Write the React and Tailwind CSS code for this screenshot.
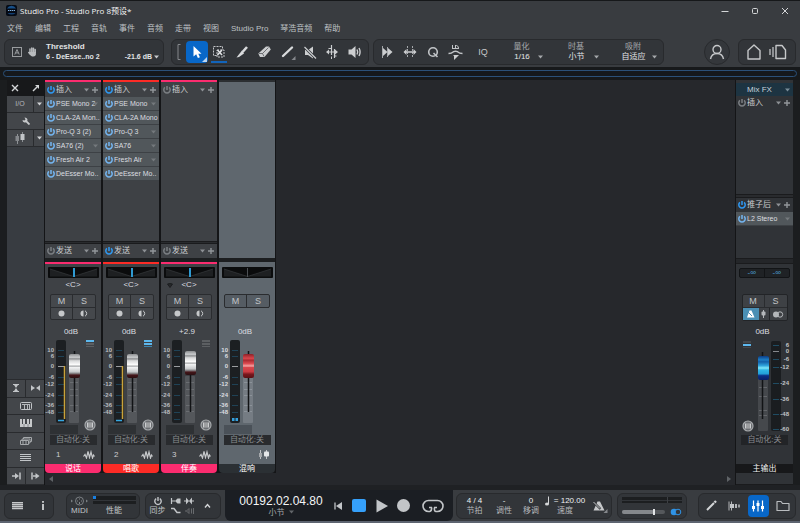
import React from "react";

const BLUE = "#2f93e6";

function Svg({ w, h, children, className = "" }) {
  return (
    <svg
      width={w}
      height={h}
      viewBox={`0 0 ${w} ${h}`}
      fill="none"
      stroke="none"
      aria-hidden="true"
      className={`block shrink-0 ${className}`}
    >
      {children}
    </svg>
  );
}

function Power({ on = true, soft = false }) {
  const c = on ? (soft ? "#74b6f2" : "#2e9af5") : "#7b7f83";
  return (
    <Svg w={8} h={8}>
      <path d="M1.900 1.400A3.200 3.200 0 1 0 6.100 1.400" stroke={c} strokeWidth="1.500" />
      <path d="M4 0V4" stroke={c} strokeWidth="1.500" />
    </Svg>
  );
}

function Caret({ color = "#8d9195" }) {
  return (
    <Svg w={5} h={4}>
      <path d="M0 0.5H5L2.5 3.5Z" fill={color} />
    </Svg>
  );
}

function Plus() {
  return (
    <Svg w={6} h={6}>
      <path d="M3 0V6M0 3H6" stroke="#92969a" strokeWidth="1.4" />
    </Svg>
  );
}

function Wave() {
  return (
    <Svg w={12} h={9}>
      <path
        d="M0.5 6.5L2 4.5L3.5 8L5 1.5L6.5 7.5L8 2L9.5 8L10.5 5L11.5 6.5"
        stroke="#c6c8ca"
        strokeWidth="1.2"
      />
    </Svg>
  );
}

/* ---------- title, menu, toolbar ---------- */

function TitleBar() {
  return (
    <header className="flex h-[19px] items-center pl-[6px]">
      <Svg w={11} h={11}>
        <rect width="11" height="11" rx="2" fill="#050a14" />
        <path d="M1 3.5A5 5 0 0 1 10 3.5Z" fill="#17508a" />
        <path d="M1.5 8A5 4 0 0 0 9.5 8Z" fill="#123f72" />
        <path d="M2 5.5H9" stroke="#7fb0e0" strokeWidth="1" strokeDasharray="1.4 0.6" />
      </Svg>
      <h1 className="ml-[3px] flex-1 font-['Open_Sans','Noto_Sans_CJK_SC',sans-serif] text-[8px] leading-[12px] text-[#f4f4f4]">
        Studio Pro - Studio Pro 8预设*
      </h1>
      <div className="flex items-center gap-[22px] pr-[11px]">
        <button aria-label="最小化">
          <Svg w={8} h={8}><path d="M0.5 4.5H7.5" stroke="#d4d6d8" /></Svg>
        </button>
        <button aria-label="最大化">
          <Svg w={8} h={8}><rect x="1.500" y="1.500" width="5" height="5" rx="1" stroke="#d4d6d8" /></Svg>
        </button>
        <button aria-label="关闭">
          <Svg w={8} h={8}><path d="M1 1L7 7M7 1L1 7" stroke="#d4d6d8" /></Svg>
        </button>
      </div>
    </header>
  );
}

const MENUS = ["文件", "编辑", "工程", "音轨", "事件", "音频", "走带", "视图", "Studio Pro", "琴浩音频", "帮助"];

function MenuBar() {
  return (
    <nav className="flex h-[17px] items-center gap-3 pl-[7px] text-[8px] text-[#bfc2c5]">
      {MENUS.map((m) => (
        <button key={m} className="whitespace-nowrap">{m}</button>
      ))}
    </nav>
  );
}

function Panel({ children, className = "" }) {
  return (
    <div className={`flex h-[26px] shrink-0 items-center rounded-md border border-[#282a2d] bg-[#323539] ${className}`}>
      {children}
    </div>
  );
}

function Tool({ label, children, className = "w-[23px]" }) {
  return (
    <button aria-label={label} className={`flex h-[22px] items-center justify-center ${className}`}>
      {children}
    </button>
  );
}

function Choice({ label, options, width }) {
  return (
    <label className={`flex flex-col items-center text-[8px] text-[#a5a8ab] ${width}`}>
      <span className="h-[10px] leading-[10px]">{label}</span>
      <span className="flex h-[10px] w-full items-center">
        <select className="min-w-0 flex-1 appearance-none bg-transparent pl-[6px] text-center leading-[10px] text-[#e3e5e7]">
          {options.map((o) => <option key={o}>{o}</option>)}
        </select>
        <Caret color="#a5a8ab" />
      </span>
    </label>
  );
}

function Toolbar() {
  return (
    <div className="flex h-[30px] items-center px-1">
      <Panel className="w-[160px] pr-1 pl-[7px]">
        <Svg w={10} h={10}>
          <rect x="0.5" y="0.5" width="9" height="9" stroke="#9a9da0" />
          <path d="M2.8 7.5L5 2.5L7.2 7.5M3.6 5.9H6.4" stroke="#9a9da0" />
        </Svg>
        <Svg w={9} h={10} className="ml-[6px]">
          <path
            d="M2 5.5V2M3.8 5V1M5.5 5V1.2M7.2 5.5V2.4M0.8 5.5L2.5 7.5"
            stroke="#b9bcbf" strokeWidth="1.5" strokeLinecap="round"
          />
          <path d="M1.6 5H7.9V7.2A2.6 2.6 0 0 1 5.4 9.6H4.2Q3 9.4 1.6 6.8Z" fill="#b9bcbf" />
        </Svg>
        <div className="ml-[9px] flex-1 text-[8px] leading-[10px] font-bold text-[#e1e3e5]">
          <div>Threshold</div>
          <div className="flex items-center justify-between text-[7px]">
            <span>6 - DeEsse..no 2</span>
            <span className="flex items-center gap-[2px]">-21.6 dB <Caret color="#c8cacc" /></span>
          </div>
        </div>
      </Panel>

      <Panel className="ml-[7px] w-[198px] pl-[5px]">
        <Svg w={4} h={16}><path d="M3.5 0.5H1V15.5H3.5" stroke="#85888c" /></Svg>
        <button aria-label="箭头工具" aria-pressed="true" className="ml-[5px] flex h-[22px] w-[22px] shrink-0 items-center justify-center rounded-sm bg-[#0867c8]">
          <Svg w={20} h={20}>
            <path d="M6.500 4V14.500L9.200 12.300L10.900 16L12.900 15.200L11.300 11.700H14.500Z" fill="#fff" />
            <path d="M20 15V20H15Z" fill="#bcd6f2" />
          </Svg>
        </button>
        <Tool label="范围工具">
          <Svg w={18} h={22}>
            <rect x="3.5" y="5.500" width="9" height="9" stroke="#c2c5c8" strokeDasharray="2 1" />
            <rect x="7" y="9" width="7" height="7" fill="#323539" stroke="#c2c5c8" strokeDasharray="2 1" />
            <path d="M7.500 9L12 14M12 9L7.500 14" stroke="#e0e2e4" strokeWidth="1.600" />
            <path d="M1 21H17" stroke="#0b72dc" strokeWidth="1.600" />
          </Svg>
        </Tool>
        <Tool label="切分工具">
          <Svg w={12} h={12}>
            <path d="M11 1L6.500 6" stroke="#d8dadc" strokeWidth="2.600" />
            <path d="M6 4.500L0.500 11.500L3 11L8 7.500Z" fill="#d8dadc" />
          </Svg>
        </Tool>
        <Tool label="擦除工具">
          <Svg w={13} h={12}>
            <path d="M8 0.500H11L12.800 3.500L6.500 11H2L0.300 7.500Z" fill="#ccced0" />
            <path d="M1 7.500H4.500L10.500 1.500M4.500 7.500L6 10.500" stroke="#45484c" strokeWidth="0.700" />
          </Svg>
        </Tool>
        <Tool label="绘制工具">
          <Svg w={16} h={18}>
            <path d="M3 13L12 4.500" stroke="#d8dadc" strokeWidth="2.400" strokeLinecap="round" />
            <path d="M15.500 13V17H11.500Z" fill="#85888c" />
          </Svg>
        </Tool>
        <Tool label="静音工具">
          <Svg w={13} h={13}>
            <path d="M1 4H4L9 0.500V12.500L4 9H1Z" fill="#ccced0" />
            <path d="M0.500 1L12 12.500" stroke="#323539" strokeWidth="2.800" />
            <path d="M0.500 1L12 12.500" stroke="#ccced0" strokeWidth="1.300" />
          </Svg>
        </Tool>
        <Tool label="弯曲工具" className="w-[21px]">
          <Svg w={12} h={14}>
            <path d="M5.500 0V10M2 7H10M8.500 4V13" stroke="#ccced0" strokeWidth="1.200" />
            <path d="M0 7L3 4.500V9.500ZM12 7L9 4.500V9.500Z" fill="#ccced0" />
            <path d="M2.500 3.500H6M5.500 11.500V14M8 11H10.500" stroke="#ccced0" />
          </Svg>
        </Tool>
        <Tool label="监听工具" className="w-[26px]">
          <Svg w={14} h={12}>
            <path d="M0.500 3.500H3.500L7.500 0V12L3.500 8.500H0.500Z" fill="#ccced0" />
            <path d="M9 3.500Q10.400 6 9 8.500M11 2Q13.200 6 11 10" stroke="#ccced0" strokeWidth="1.400" />
          </Svg>
        </Tool>
      </Panel>

      <Panel className="ml-[4px] w-[291px] pl-[1px]">
        <Tool label="跟随播放">
          <Svg w={12} h={14}>
            <path d="M1.500 1V13M6.500 2V12" stroke="#a5a8ab" />
            <path d="M2 3L6.500 7L2 11ZM7 3L11.500 7L7 11Z" fill="#ccced0" />
          </Svg>
        </Tool>
        <Tool label="自动滚动">
          <Svg w={14} h={14}>
            <path d="M4.500 1V13M9.500 1V13" stroke="#a5a8ab" strokeDasharray="2 1" />
            <path d="M2 7H12" stroke="#ccced0" strokeWidth="1.500" />
            <path d="M0.500 7L3.500 4V10ZM13.500 7L10.500 4V10Z" fill="#ccced0" />
          </Svg>
        </Tool>
        <Tool label="量化">
          <Svg w={12} h={12}>
            <circle cx="6" cy="6" r="4.300" stroke="#c2c5c8" strokeWidth="1.600" />
            <path d="M6.500 7L10.500 11" stroke="#c2c5c8" strokeWidth="1.600" />
          </Svg>
        </Tool>
        <Tool label="时间拉伸">
          <Svg w={15} h={16}>
            <path d="M4.500 1V5M4 4.500H10.500M7.500 1V4M7 1.500H8.500Q11 2 10.500 5" stroke="#c2c5c8" />
            <path d="M0.500 9.500Q3.500 9.500 5.500 7.700Q7.500 6.700 9.500 7.700Q11.500 9.500 14.500 9.500" stroke="#c2c5c8" strokeWidth="1.500" />
            <path d="M5 11H11L6 16V12Z" fill="#ccced0" />
          </Svg>
        </Tool>
        <Tool label="输入量化" className="w-[32px]">
          <span className="text-[9px] text-[#c6c8ca]">IQ</span>
        </Tool>
        <div className="ml-px flex gap-[10px]">
          <Choice label="量化" options={["1/16", "1/8", "1/4"]} width="w-[43px]" />
          <Choice label="时基" options={["小节", "秒"]} width="w-[46px]" />
          <Choice label="吸附" options={["自适应", "关"]} width="w-[48px]" />
        </div>
      </Panel>

      <div className="flex-1" />
      <button aria-label="用户" className="mr-[8px] flex h-[26px] w-[26px] items-center justify-center rounded-full border border-[#282a2d] bg-[#34373b]">
        <Svg w={16} h={16}>
          <circle cx="8" cy="5.500" r="4" stroke="#c6c8ca" strokeWidth="1.400" />
          <path d="M1.500 15Q2.500 9.500 8 9.500T14.500 15" stroke="#c6c8ca" strokeWidth="1.400" />
        </Svg>
      </button>
      <Panel className="w-[58px] justify-between px-[8px]">
        <button aria-label="起始页">
          <Svg w={14} h={16}>
            <path d="M1 15V6.500L7 1L13 6.500V15Z" stroke="#c6c8ca" strokeWidth="1.400" strokeLinejoin="round" />
          </Svg>
        </button>
        <button aria-label="页面">
          <Svg w={18} h={16}>
            <path d="M1 5V11M4 3V13" stroke="#b4b7ba" strokeWidth="1.400" />
            <path d="M7 1.500H13L16.500 6V14.500H7Z" stroke="#c6c8ca" strokeWidth="1.400" strokeLinejoin="round" />
          </Svg>
        </button>
      </Panel>
    </div>
  );
}

/* ---------- mixer ---------- */

const sideButton = "flex items-center justify-center bg-[#43464a]";

function SideBar() {
  return (
    <aside className="flex w-[37px] shrink-0 flex-col bg-[#383c41] text-[7px] text-[#b4b7ba]">
      <div className="flex h-4 items-center justify-between bg-[#17181a] px-[4px]">
        <button aria-label="关闭混音台">
          <Svg w={8} h={8}><path d="M1 1L7 7M7 1L1 7" stroke="#d4d6d8" strokeWidth="1.400" /></Svg>
        </button>
        <button aria-label="分离窗口">
          <Svg w={8} h={8}>
            <path d="M1 7L5 3" stroke="#d4d6d8" strokeWidth="1.400" />
            <path d="M3 1H7V5Z" fill="#d4d6d8" />
          </Svg>
        </button>
      </div>
      <div className="grid grid-cols-[26px_1fr] grid-rows-[16px_16px_16px] gap-px bg-[#292b2e] pb-px">
        <button className={sideButton}>I/O</button>
        <button aria-label="I/O 选项" className={sideButton}><Caret color="#d0d2d4" /></button>
        <button aria-label="设置" className={`col-span-2 ${sideButton}`}>
          <Svg w={8} h={8}>
            <path d="M3.500 3.500L7.500 7.500" stroke="#c6c8ca" strokeWidth="1.800" />
            <path d="M0.500 3L2.500 3.500L3.500 2.500L2.500 0.500Q5.500 0.500 5.500 3Q5 6 2.500 5.500Q0.500 5 0.500 3Z" fill="#c6c8ca" />
          </Svg>
        </button>
        <button aria-label="推子视图" className={sideButton}>
          <Svg w={10} h={12}>
            <path d="M2.500 2V12M7.500 0V10" stroke="#8d9195" />
            <rect x="0.500" y="4" width="3.500" height="5" fill="#85888c" />
            <rect x="5.500" y="2" width="4" height="6" fill="#c2c5c8" />
          </Svg>
        </button>
        <button aria-label="推子视图选项" className={sideButton}><Caret color="#d0d2d4" /></button>
      </div>
      <div className="flex-1" />
      <div className="grid h-[106px] grid-cols-2 grid-rows-6 gap-px border-y border-[#292b2e] bg-[#292b2e]">
        <button aria-label="收窄高度" className={sideButton}>
          <Svg w={6} h={8}><path d="M0 0.500H6M0 7.500H6" stroke="#c2c5c8" /><path d="M1 1H5L3 4ZM1 7H5L3 4Z" fill="#c2c5c8" /></Svg>
        </button>
        <button aria-label="收窄宽度" className={sideButton}>
          <Svg w={9} h={6}><path d="M0.500 0.500V5.500M8.500 0.500V5.500" stroke="#c2c5c8" /><path d="M1 1L4 3L1 5ZM8 1L5 3L8 5Z" fill="#c2c5c8" /></Svg>
        </button>
        <button aria-label="输入" className={`col-span-2 ${sideButton}`}>
          <Svg w={12} h={8}><rect x="0.500" y="0.500" width="11" height="7" rx="1" stroke="#c2c5c8" /><path d="M2 2.500H10M4.500 3V7M7.500 3V7M9.500 3V7" stroke="#b4b7ba" /></Svg>
        </button>
        <button aria-label="乐器" className={`col-span-2 ${sideButton}`}>
          <Svg w={12} h={8}><path d="M0 0V8H12V0H10V5H9V0H7V5H5V0H3V5H2V0Z" fill="#c6c8ca" /><path d="M4 5V8M8 5V8" stroke="#43464a" strokeWidth="0.500" /></Svg>
        </button>
        <button aria-label="组" className={`col-span-2 ${sideButton}`}>
          <Svg w={12} h={8}><path d="M0.500 3.500H8.500V7.500H0.500ZM2 3V2H10V6H9M3.500 2V0.500H11.500V4.500H10" stroke="#a5a8ab" /><path d="M3 4V7M6 4V7" stroke="#a5a8ab" /></Svg>
        </button>
        <button aria-label="列表" className={`col-span-2 ${sideButton}`}>
          <Svg w={11} h={8}><path d="M0 0.500H11M0 2.500H11M0 4.500H11M0 6.500H11" stroke="#c2c5c8" /></Svg>
        </button>
        <button aria-label="左侧固定" className={sideButton}>
          <Svg w={9} h={8}><path d="M0 4H4M8 0.500V7.500" stroke="#c2c5c8" strokeWidth="1.500" /><path d="M3 1L7 4L3 7Z" fill="#c2c5c8" /></Svg>
        </button>
        <button aria-label="右侧固定" className={sideButton}>
          <Svg w={9} h={8}><path d="M1 0.500V7.500M2 4H5" stroke="#c2c5c8" strokeWidth="1.500" /><path d="M4.500 1L8.500 4L4.500 7Z" fill="#c2c5c8" /></Svg>
        </button>
      </div>
    </aside>
  );
}

function SlotHeader({ label, on, className = "h-[14px]" }) {
  return (
    <div className={`flex shrink-0 items-center pr-[3px] pl-[2px] text-[8px] text-[#ccced0] ${className}`}>
      <button aria-label={`${label} 开关`} aria-pressed={on}><Power on={on} /></button>
      <span className="ml-px flex-1 whitespace-nowrap">{label}</span>
      <button aria-label={`${label} 选项`} className="mr-[3px]"><Caret /></button>
      <button aria-label={`添加${label}`}><Plus /></button>
    </div>
  );
}

function Insert({ name }) {
  return (
    <li className="flex h-[14px] items-center border-b border-[#3d4145] bg-[#51575b] pr-[3px] pl-[2px] text-[7px] text-[#dcdee0]">
      <button aria-label={`${name} 开关`} aria-pressed="true"><Power soft /></button>
      <span className="ml-px w-0 flex-1 whitespace-nowrap">{name}</span>
      {name.length < 11 && <Caret color="#74797d" />}
    </li>
  );
}

function Pan({ active }) {
  return (
    <Svg w={51} h={11}>
      <rect width="51" height="11" rx="1" fill="#0b0c0d" />
      <path d="M2 2L25.500 9.500L49 2V9.500H2Z" fill="#1e2022" />
      <path d="M2 2L25.500 9.500L49 2" stroke="#37393c" strokeWidth="0.700" />
      {active ? <rect x="25" y="1" width="2" height="9" fill="#2f9ad2" /> : <rect x="25" y="1" width="1" height="9" fill="#4c5054" />}
    </Svg>
  );
}

const SCALE = [["10", 10], ["6", 16], ["0", 26], ["-6", 37], ["-12", 44], ["-24", 55], ["-36", 65], ["-48", 72]];

function GroupBadge({ x, y }) {
  return (
    <g transform={`translate(${x} ${y})`}>
      <circle r="5" stroke="#a5a8ab" strokeWidth="1.200" fill="#6a6d71" />
      <rect x="-3" y="-2.500" width="6" height="5" fill="#ccced0" />
      <path d="M-1 -2.500V2.500M1 -2.500V2.500" stroke="#45484c" strokeWidth="0.700" />
    </g>
  );
}

function FaderArt({ ch }) {
  const fx = ch.fx;
  return (
    <Svg w={56} h={95} className="[grid-area:1/1]">
      {SCALE.map(([t, y]) => (
        <text key={t} x="9" y={y + 2} textAnchor="end" fontSize="6" fontWeight="bold" fill={fx ? "#dcdee0" : "#babdc0"}>{t}</text>
      ))}
      <rect x="11" y="0" width="10" height="83" rx="2" fill="#1c1f22" />
      {SCALE.map(([t, y]) => (
        <path key={t} d={`M13 ${y + 0.5}H19`} stroke={t === "0" ? "#9a9da0" : "#1f4256"} />
      ))}
      {ch.level && <path d="M19.500 26V79" stroke="#c9a23a" strokeWidth="1.500" />}
      {ch.level && <path d="M13 80.500H19" stroke="#35a7e0" strokeWidth="1.500" />}
      {!ch.level && <path d="M13 79.500H19" stroke={fx ? "#35a0dc" : "#1f4256"} strokeWidth={fx ? 3 : 1} strokeDasharray={fx ? "2.500 1" : "none"} />}
      <rect x="24" y="36" width="10" height="47" rx="1" fill={fx ? "#757c83" : "#54575b"} />
      <path d="M25 42.500H33M25 49.500H33M25 55.500H33M25 65.500H33M25 71.500H33" stroke={fx ? "#8b9299" : "#6a6d71"} />
      <path d="M29.500 11V72" stroke="#111315" strokeWidth="1.500" />
      {!fx && (
        <g>
          <rect x="41" y="0" width="8" height="2" fill={ch.level ? "#5db8ee" : "#5c5f62"} />
          <rect x="41" y="3" width="8" height="2" fill={ch.bars > 1 ? "#5db8ee" : "#5c5f62"} />
          <rect x="41" y="6" width="8" height="1" fill={ch.bars > 1 ? "#3c86b0" : "#5c5f62"} />
          <GroupBadge x={45} y={85} />
        </g>
      )}
      <rect x="5" y="85" width="28" height="9" fill={fx ? "#4a5158" : "#2e3134"} />
    </Svg>
  );
}

const thumbBase =
  "m-0 w-[11px] cursor-pointer appearance-none bg-transparent [direction:rtl] [writing-mode:vertical-lr] [&::-webkit-slider-thumb]:h-6 [&::-webkit-slider-thumb]:w-[11px] [&::-webkit-slider-thumb]:appearance-none [&::-webkit-slider-thumb]:rounded-xs";
const silverThumb =
  "[&::-webkit-slider-thumb]:bg-[linear-gradient(#8d8f91_0%,#c9cbcd_14%,#8d8f91_20%,#d8d9da_28%,#ffffff_46%,#9d9fa1_50%,#f0f1f2_56%,#c9cbcd_74%,#8d8f91_80%,#441519_88%,#2a1012_100%)]";
const redThumb =
  "[&::-webkit-slider-thumb]:bg-[linear-gradient(#8c1f26_0%,#d8464c_18%,#a92a31_26%,#dc4c52_40%,#f3a5a5_50%,#d8464c_56%,#c93b42_74%,#7a171d_84%,#5a1014_100%)]";
const blueThumb =
  "[&::-webkit-slider-thumb]:bg-[linear-gradient(#0a3c86_0%,#1e7ec4_16%,#125ea8_24%,#2fa3dc_40%,#7fe8fa_50%,#2fb6e6_58%,#23a0d8_74%,#0b2f86_82%,#081f66_100%)]";

function MuteSolo() {
  return (
    <>
      <button className="h-[13px] border-r border-b border-[#2a2c2f] text-[9px] leading-[12px]">M</button>
      <button className="h-[13px] border-b border-[#2a2c2f] text-[9px] leading-[12px]">S</button>
    </>
  );
}

function Channel({ ch }) {
  const fx = ch.fx;
  const body = fx ? "bg-[#5f676e]" : "bg-[#3e4145]";
  return (
    <section aria-label={ch.name} className="flex w-[56px] shrink-0 flex-col">
      <div className={`h-[2px] ${ch.line}`} />
      <div className={`flex flex-1 flex-col ${body}`}>
        {!fx && (
          <>
            <SlotHeader label="插入" on={ch.ins} className="h-[15px]" />
            <ul className="flex-1">
              {ch.inserts.map((n) => <Insert key={n} name={n} />)}
            </ul>
            <div className="h-[3px] border-y border-[#1a1b1d] bg-[#292b2e]" />
            <SlotHeader label="发送" on={ch.send} />
          </>
        )}
      </div>
      <div className="h-1 bg-[#1c1e20]" />
      <div className={`h-[2px] ${ch.line2}`} />
      <div className={`flex h-[200px] flex-col items-center pt-[3px] ${body}`}>
        <Pan active={!fx} />
        <div className="grid h-[16px] w-full grid-cols-[1fr_20px_1fr] items-center justify-items-center pb-[2px] text-[8px] text-[#dcdee0]">
          <span>
            {ch.marker && <Svg w={6} h={5}><path d="M0.500 1Q3 0 5.500 1L3 4.500Z" fill="#26282b" stroke="#1c1e20" /></Svg>}
          </span>
          <span>{fx ? "" : "<C>"}</span>
        </div>
        <div className="h-[26px] w-[46px]">
          <div className={`grid grid-cols-2 rounded-xs border border-[#2a2c2f] text-[#c2c5c8] ${fx ? "h-[14px] bg-[#555c63]" : "bg-[#45484c]"}`}>
            <MuteSolo />
            {!fx && (
              <>
                <button aria-label="录音" className="flex h-[11px] items-center justify-center border-r border-[#2a2c2f]">
                  <Svg w={7} h={7}><circle cx="3.500" cy="3.500" r="3" fill="#c6c8ca" /></Svg>
                </button>
                <button aria-label="监听" className="flex h-[11px] items-center justify-center">
                  <Svg w={8} h={7}>
                    <path d="M3.500 0.500A3 3 0 0 0 3.500 6.500Z" fill="#c6c8ca" />
                    <path d="M5 0.800A3 3 0 0 1 5 6.200" stroke="#c6c8ca" />
                  </Svg>
                </button>
              </>
            )}
          </div>
        </div>
        <output className="flex h-5 w-full items-center justify-center pt-[3px] pr-[4px] text-[8px] text-[#dcdee0]">{ch.db}</output>
        <div className="grid h-[95px] w-[56px]">
          <FaderArt ch={ch} />
          <input
            type="range"
            aria-label={`${ch.name} 音量`}
            defaultValue={ch.value}
            className={`ml-[24px] h-[83px] [grid-area:1/1] ${thumbBase} ${fx ? redThumb : silverThumb}`}
          />
        </div>
        <button className="h-[10px] w-[47px] bg-[#292b2e] text-[8px] leading-[10px] text-[#888b8f]">自动化:关</button>
        <div className="flex h-[19px] w-full items-center justify-between pr-[6px] pl-[11px] text-[8px] text-[#ccced0]">
          <span>{ch.num}</span>
          {fx ? (
            <Svg w={11} h={9}>
              <path d="M2.500 0V9M8.500 0V9" stroke="#c2c5c8" />
              <rect x="1" y="3" width="3" height="4" fill="#a5a8ab" />
              <rect x="6" y="1.500" width="5" height="5" rx="1" fill="#e6e8ea" />
            </Svg>
          ) : <Wave />}
        </div>
      </div>
      <div className={`h-[9px] rounded-b-sm text-center text-[8px] leading-[9px] text-white ${ch.label}`}>{ch.name}</div>
    </section>
  );
}

const CHANNELS = [
  {
    name: "说话", num: "1", db: "0dB", value: 76, level: true, bars: 1, ins: true, send: false,
    inserts: ["PSE Mono 2", "CLA-2A Mon..", "Pro-Q 3 (2)", "SA76 (2)", "Fresh Air 2", "DeEsser Mo.."],
    line: "bg-[#fb2c6f]", line2: "bg-[#fb2c6f]", label: "bg-[#fb2c6f]",
  },
  {
    name: "唱歌", num: "2", db: "0dB", value: 76, level: true, bars: 2, ins: true, send: true,
    inserts: ["PSE Mono", "CLA-2A Mono", "Pro-Q 3", "SA76", "Fresh Air", "DeEsser Mo.."],
    line: "bg-[#fc2b26]", line2: "bg-[#fc2b26]", label: "bg-[#fc2b26]",
  },
  {
    name: "伴奏", num: "3", db: "+2.9", value: 82, marker: true, ins: false, send: false, inserts: [],
    line: "bg-[#fb2c6f]", line2: "bg-[#fb2c6f]", label: "bg-[#fb2c6f]",
  },
  {
    name: "混响", num: "", db: "0dB", value: 76, fx: true, inserts: [],
    line: "bg-[#2b2e31]", line2: "bg-[#5f676e]", label: "bg-[#2b3034]",
  },
];

const MAIN_SCALE = [["6", 4], ["0", 10], ["-6", 18], ["-12", 26], ["-24", 42], ["-36", 58], ["-48", 73], ["-60", 88]];

function Main() {
  return (
    <section aria-label="主输出" className="flex w-[57px] shrink-0 flex-col bg-[#303337]">
      <button className="mt-[3px] flex h-[13px] items-center justify-center bg-[#1d3442] pr-[3px] pl-[11px] text-[8px] text-[#c6d2da]">
        <span className="flex-1 text-left">Mix FX</span>
        <Caret color="#7a8d99" />
      </button>
      <SlotHeader label="插入" on={false} className="h-[13px]" />
      <div className="flex-1" />
      <div className="h-1 border-y border-[#1a1b1d] bg-[#292b2e]" />
      <SlotHeader label="推子后" on />
      <ul><Insert name="L2 Stereo" /></ul>
      <div className="h-8" />
      <div className="h-[6px] border-y border-[#1a1b1d] bg-[#242629]" />
      <div className="flex h-[200px] flex-col items-center pt-[4px]">
        <div className="grid h-[10px] w-[51px] grid-cols-2 rounded-xs border border-[#121416] bg-[#1f2225] text-center text-[8px] leading-[8px] text-[#4a9ccc]">
          <span className="border-r border-[#121416]">-∞</span>
          <span>-∞</span>
        </div>
        <div className="mt-[16px] w-[46px] rounded-xs border border-[#222427] bg-[#3e4145] text-[#c2c5c8]">
          <div className="grid grid-cols-2"><MuteSolo /></div>
          <div className="grid h-[12px] grid-cols-[16px_11px_1fr]">
            <button aria-label="节拍器" aria-pressed="true" className="flex items-center justify-center bg-[#4a8fb4]">
              <Svg w={9} h={8}><path d="M1 7.500L3.500 0.500H5.500L8.500 7.500Z" fill="#fff" /><path d="M1 1L6 6" stroke="#4a8fb4" /></Svg>
            </button>
            <button aria-label="推子链接" className="flex items-center justify-center border-r border-[#222427]">
              <Svg w={5} h={8}><path d="M2.500 0V8" stroke="#b4b7ba" /><rect x="0.500" y="1.500" width="4" height="4" rx="1" fill="#b4b7ba" /></Svg>
            </button>
            <button aria-label="单声道" className="flex items-center justify-center">
              <Svg w={12} h={7}><circle cx="4" cy="3.500" r="3" fill="#b4b7ba" /><circle cx="8" cy="3.500" r="2.700" stroke="#b4b7ba" /></Svg>
            </button>
          </div>
        </div>
        <output className="flex h-5 w-full items-center justify-center pt-px pr-[4px] text-[8px] text-[#dcdee0]">0dB</output>
        <div className="grid h-[94px] w-full">
          <Svg w={57} h={94} className="[grid-area:1/1]">
            <rect x="7" y="0" width="8" height="2" fill="#45484c" />
            <rect x="7" y="3" width="8" height="2" fill="#5db8ee" />
            <rect x="7" y="6" width="8" height="1" fill="#45484c" />
            <rect x="22" y="36" width="10" height="54" rx="1" fill="#45484c" />
            <path d="M23 46.500H31M23 55.500H31M23 69.500H31M23 74.500H31" stroke="#63666a" />
            <path d="M26.500 11V78" stroke="#111315" strokeWidth="1.500" />
            <rect x="35" y="0" width="10" height="90" rx="2" fill="#1a1d20" />
            {MAIN_SCALE.map(([t, y]) => (
              <g key={t}>
                <path d={`M37 ${y + 0.5}H43`} stroke={t === "0" ? "#85888c" : "#1f4c63"} />
                <text x="53" y={y + 2} textAnchor="end" fontSize="6" fontWeight="bold" fill="#c2c5c8">{t}</text>
              </g>
            ))}
            <GroupBadge x={12} y={85} />
          </Svg>
          <input
            type="range"
            aria-label="主输出 音量"
            defaultValue="74"
            className={`ml-[22px] h-[83px] [grid-area:1/1] ${thumbBase} ${blueThumb}`}
          />
        </div>
        <button className="h-[10px] w-[47px] bg-[#222427] text-[8px] leading-[10px] text-[#888b8f]">自动化:关</button>
      </div>
      <div className="h-[9px] bg-[#17181a] text-center text-[8px] leading-[9px] text-[#f0f1f2]">主输出</div>
      <div className="h-3 border-b border-[#1a1b1d]" />
    </section>
  );
}

function Mixer() {
  return (
    <main className="flex flex-1 border-x-[7px] border-[#1b1d1f] bg-[#141517]">
      <SideBar />
      <div className="ml-px flex min-w-0 flex-1 flex-col bg-[#26282c]">
        <div className="flex flex-1">
          <div className="flex gap-[2px] border-r border-[#141517] bg-[#141517]">
            {CHANNELS.map((ch) => <Channel key={ch.name} ch={ch} />)}
          </div>
        </div>
        <div className="flex h-3 items-center justify-between px-[4px]">
          <Svg w={4} h={6}><path d="M4 0V6L0 3Z" fill="#5f6367" /></Svg>
          <Svg w={4} h={6}><path d="M0 0V6L4 3Z" fill="#5f6367" /></Svg>
        </div>
      </div>
      <div className="w-px" />
      <Main />
    </main>
  );
}

/* ---------- transport ---------- */

function Stat({ top, label, className }) {
  return (
    <div className={`flex flex-col items-center text-[8px] leading-[10px] whitespace-nowrap ${className}`}>
      <span className="flex items-center text-[#eef0f2]">{top}</span>
      <span className="text-[#b4b7ba]">{label}</span>
    </div>
  );
}

function Transport() {
  return (
    <footer className="flex h-[31px] items-center px-1">
      <Panel className="w-[50px] gap-[18px] pl-[7px]">
        <button aria-label="菜单">
          <Svg w={11} h={8}><path d="M0 0.500H11M0 2.500H11M0 4.500H11M0 6.500H11" stroke="#c6c8ca" strokeWidth="1.300" /></Svg>
        </button>
        <button aria-label="信息">
          <Svg w={4} h={9}><path d="M2 3V9M2 0V1.800" stroke="#e3e5e7" strokeWidth="1.600" /></Svg>
        </button>
      </Panel>

      <Panel className="ml-[12px] w-[74px] gap-[3px] px-[3px]">
        <div className="flex w-[19px] flex-col items-center text-[8px] leading-[10px] text-[#c2c5c8]">
          <Svg w={19} h={10}>
            <path d="M1 3.500L3 5L1 6.500ZM16 3.500L18 5L16 6.500Z" fill="#7b7f83" />
            <circle cx="9.500" cy="5" r="4" stroke="#7b7f83" />
            <path d="M7 5H8M11 5H12M9 3H10M9.500 6V8" stroke="#85888c" />
          </Svg>
          <span>MIDI</span>
        </div>
        <div className="flex flex-1 flex-col items-center text-[8px] leading-[10px] text-[#c2c5c8]">
          <Svg w={43} h={10}>
            <rect width="43" height="4" y="0" fill="#1c1e20" />
            <rect width="43" height="3" y="5" fill="#1c1e20" />
            <rect width="3" height="3" y="0" fill="#1a7fe0" />
          </Svg>
          <span>性能</span>
        </div>
      </Panel>

      <Panel className="ml-[5px] w-[76px] pl-[3px] text-[8px] leading-[10px] text-[#c2c5c8]">
        <button className="flex w-[17px] flex-col items-center">
          <Svg w={8} h={10}><path d="M2.200 2.600A3.200 3.200 0 1 0 5.800 2.600M4 1V5" stroke="#c2c5c8" strokeWidth="1.400" /></Svg>
          <span>同步</span>
        </button>
        <Svg w={25} h={20} className="ml-[4px]">
          <path d="M1.500 2V8M2 5H5" stroke="#c2c5c8" strokeWidth="1.200" />
          <path d="M5 5L7.500 2.500H10.500V7.500H7.500Z" fill="#c2c5c8" />
          <path d="M14 5H16M22 5H24" stroke="#c2c5c8" />
          <path d="M16 1.500L19 5L16 8.500ZM22 1.500L19 5L22 8.500Z" fill="#c2c5c8" />
          <path d="M1 12.500H4L7 16.500H10.500" stroke="#c2c5c8" strokeWidth="1.500" />
          <path d="M15 15H16.500L19 12.500V17.500L16.500 15M21.500 12.500V17.500M23.500 12V18" stroke="#686b6e" />
        </Svg>
        <button aria-label="展开" className="ml-[9px]">
          <Svg w={7} h={5}><path d="M1 4.500L3.500 1.500L6 4.500" stroke="#d4d6d8" strokeWidth="1.400" /></Svg>
        </button>
      </Panel>

      <div className="ml-[4px] flex h-[31px] min-w-[228px] flex-1 items-center justify-center rounded-b-md bg-[#1b1e23] pl-[5px]">
        <div className="flex w-[84px] flex-col items-center whitespace-nowrap">
          <span className="text-[12px] leading-[13px] text-[#f4f5f6]">00192.02.04.80</span>
          <span className="flex items-center gap-[4px] text-[8px] leading-[9px] text-[#a5a8ab]">小节 <Caret color="#63666a" /></span>
        </div>
        <div className="ml-[11px] flex items-center">
          <button aria-label="回到开头">
            <Svg w={8} h={8}><path d="M1 0.500V7.500" stroke="#c2c5c8" strokeWidth="1.300" /><path d="M8 0V8L2 4Z" fill="#c2c5c8" /></Svg>
          </button>
          <button aria-label="停止" className="ml-[10px] h-[13px] w-[14px] rounded-xs bg-[#35a0fa]" />
          <button aria-label="播放" className="ml-[10px]">
            <Svg w={12} h={14}><path d="M0.500 0.500V13.500L12 7Z" fill="#c2c5c8" /></Svg>
          </button>
          <button aria-label="录制" className="ml-[9px] h-[13px] w-[13px] rounded-full bg-[#c2c5c8]" />
          <button aria-label="循环" className="ml-[12px]">
            <Svg w={22} h={14}>
              <path
                d="M8 12.500H6.500A5.500 5.500 0 0 1 6.500 1.500H15.500A5.500 5.500 0 0 1 15.500 12.500H14Q12 12.500 12.500 8.500M8 12.500Q10 11.500 9.500 8.500"
                stroke="#c2c5c8" strokeWidth="1.600"
              />
              <path d="M7 8.500H10M12 8.500H15" stroke="#c2c5c8" strokeWidth="1.300" />
            </Svg>
          </button>
        </div>
      </div>

      <Panel className="ml-[3px] w-[156px] pl-[5px]">
        <Stat top="4 / 4" label="节拍" className="w-[25px]" />
        <Stat top="-" label="调性" className="ml-[4px] w-[26px]" />
        <Stat top="0" label="移调" className="ml-[2px] w-[24px]" />
        <Stat
          top={
            <>
              <Svg w={6} h={10}><ellipse cx="2" cy="8" rx="2" ry="1.500" fill="#d4d6d8" /><path d="M3.500 8V0.500" stroke="#d4d6d8" /></Svg>
              <span className="ml-[3px]">= 120.00</span>
            </>
          }
          label="速度"
          className="ml-px w-[42px]"
        />
        <button aria-label="节拍器" className="ml-[6px]">
          <Svg w={16} h={16}>
            <path d="M1.500 12.500L5.500 3.500H8L12.500 12.500Z" fill="#c6c8ca" />
            <path d="M1.500 4L8.500 11" stroke="#323539" strokeWidth="2.200" />
            <path d="M1.500 4L8 10.500" stroke="#c6c8ca" />
            <path d="M15.500 11V15H11.500Z" fill="#85888c" />
          </Svg>
        </button>
      </Panel>

      <Panel className="ml-[5px] w-[70px] justify-center">
        <Svg w={60} h={20}>
          <rect y="1" width="60" height="3" fill="#1c1e20" />
          <rect y="5" width="60" height="2" fill="#1c1e20" />
          <path d="M45.500 1V7" stroke="#3c3f43" />
          <rect y="14" width="43" height="4" rx="2" fill="#55585c" />
          <rect y="14" width="32" height="4" rx="2" fill="#85888c" />
          <rect x="31" y="13" width="2" height="6" fill="#e3e5e7" />
          <circle cx="52" cy="16" r="3.300" fill={BLUE} />
          <circle cx="56" cy="16" r="2.800" fill="#323539" stroke={BLUE} />
        </Svg>
      </Panel>

      <Panel className="ml-[11px] w-[98px] pl-px">
        <Tool label="编辑">
          <Svg w={11} h={11}><path d="M1 10L8 3" stroke="#d4d6d8" strokeWidth="2" /><path d="M8.500 2.500L10 1" stroke="#d4d6d8" strokeWidth="2.400" /></Svg>
        </Tool>
        <Tool label="通道">
          <Svg w={12} h={10}><path d="M1 0.500V9.500M3.500 0.500V9.500" stroke="#b4b7ba" /><rect x="2" y="3" width="4" height="4" fill="#c2c5c8" /><rect x="7" y="3" width="2" height="4" fill="#b4b7ba" /><rect x="10" y="3.500" width="2" height="3" fill="#9a9da0" /></Svg>
        </Tool>
        <button aria-label="混音" aria-pressed="true" className="ml-[2px] flex h-[22px] w-[22px] items-center justify-center rounded-sm bg-[#0867c8]">
          <Svg w={14} h={12}>
            <path d="M2.500 0.500V11.500M7 0.500V11.500M11.500 0.500V11.500" stroke="#fff" strokeWidth="1.200" />
            <rect x="1" y="6" width="3" height="3" fill="#fff" />
            <rect x="5.500" y="3" width="3" height="3" fill="#fff" />
            <rect x="10" y="6" width="3" height="3" fill="#fff" />
          </Svg>
        </button>
        <Tool label="浏览" className="ml-[2px] w-[24px]">
          <Svg w={14} h={12}>
            <path d="M1 1.500H5L6.500 3.500H13V10.500H1Z" stroke="#b9bcbf" strokeWidth="1.200" strokeLinejoin="round" />
          </Svg>
        </Tool>
      </Panel>
    </footer>
  );
}

export default function App() {
  return (
    <div className="flex min-h-screen flex-col border-t border-b-2 border-t-[#16181a] border-b-[#5d6470] bg-[#393c40] font-['Liberation_Sans','Noto_Sans_CJK_SC',sans-serif] leading-[10px] select-none">
      <TitleBar />
      <MenuBar />
      <Toolbar />
      <div className="h-[13px] bg-[#17191b] px-[3px] py-[3px]">
        <div className="h-[7px] rounded-full border border-[#2b5078] bg-[#15181c]" />
      </div>
      <Mixer />
      <div className="h-[5px] bg-[#1f2124]" />
      <Transport />
    </div>
  );
}
